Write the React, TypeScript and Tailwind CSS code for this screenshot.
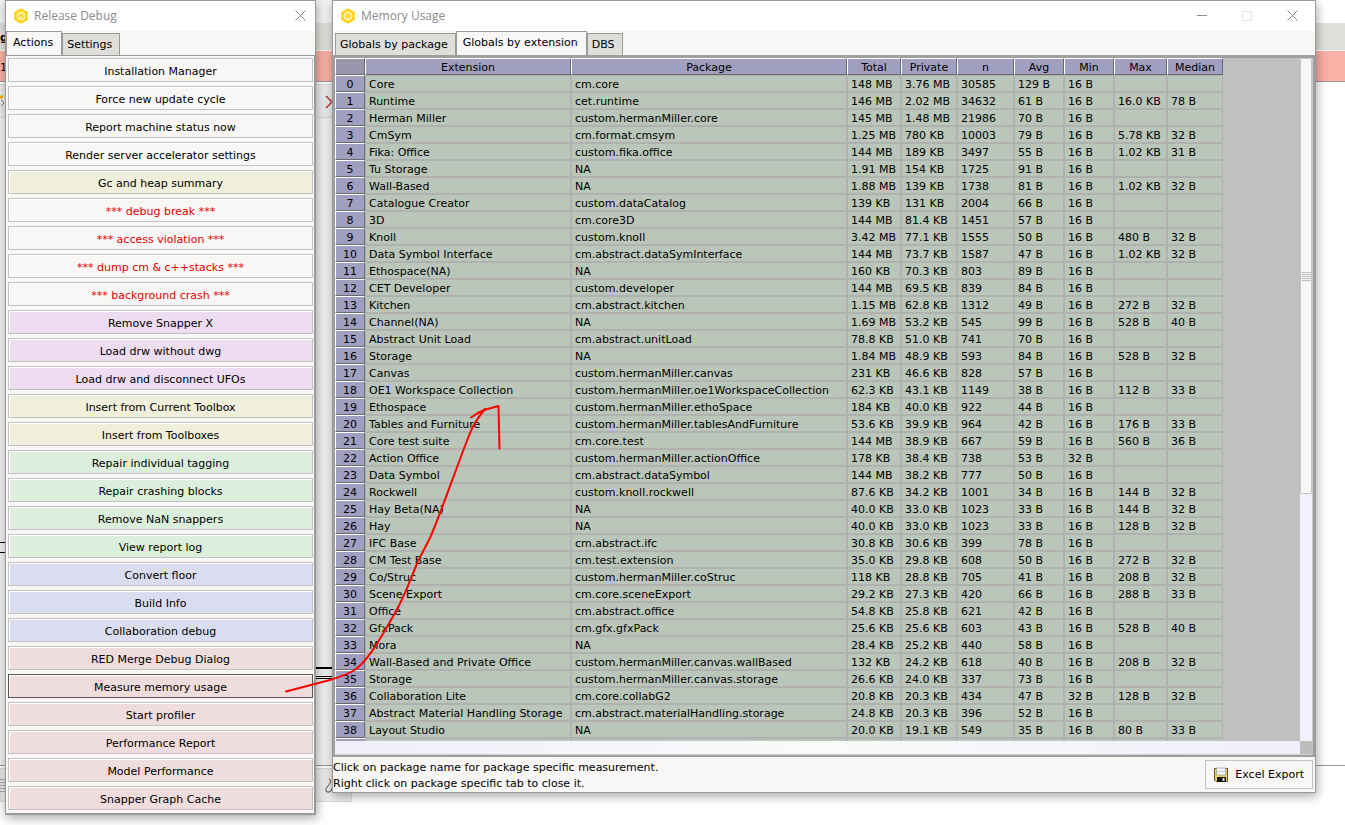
import clsx from "clsx";

type Tone = "plain" | "sand" | "alert" | "violet" | "mint" | "sky" | "rose";

const toneClasses: Record<Tone, string> = {
  plain: "bg-[#f8f7f5] text-black",
  sand: "bg-[#efefdb] text-black",
  alert: "bg-[#f8f7f5] text-[#e60000]",
  violet: "bg-[#eedcf0] text-black",
  mint: "bg-[#dcefdc] text-black",
  sky: "bg-[#dadcef] text-black",
  rose: "bg-[#efdcdc] text-black",
};

const actions: { label: string; tone: Tone; focused?: boolean }[] = [
  { label: "Installation Manager", tone: "plain" },
  { label: "Force new update cycle", tone: "plain" },
  { label: "Report machine status now", tone: "plain" },
  { label: "Render server accelerator settings", tone: "plain" },
  { label: "Gc and heap summary", tone: "sand" },
  { label: "*** debug break ***", tone: "alert" },
  { label: "*** access violation ***", tone: "alert" },
  { label: "*** dump cm & c++stacks ***", tone: "alert" },
  { label: "*** background crash ***", tone: "alert" },
  { label: "Remove Snapper X", tone: "violet" },
  { label: "Load drw without dwg", tone: "violet" },
  { label: "Load drw and disconnect UFOs", tone: "violet" },
  { label: "Insert from Current Toolbox", tone: "sand" },
  { label: "Insert from Toolboxes", tone: "sand" },
  { label: "Repair individual tagging", tone: "mint" },
  { label: "Repair crashing blocks", tone: "mint" },
  { label: "Remove NaN snappers", tone: "mint" },
  { label: "View report log", tone: "mint" },
  { label: "Convert floor", tone: "sky" },
  { label: "Build Info", tone: "sky" },
  { label: "Collaboration debug", tone: "sky" },
  { label: "RED Merge Debug Dialog", tone: "rose" },
  { label: "Measure memory usage", tone: "rose", focused: true },
  { label: "Start profiler", tone: "rose" },
  { label: "Performance Report", tone: "rose" },
  { label: "Model Performance", tone: "rose" },
  { label: "Snapper Graph Cache", tone: "rose" },
];

const columns = [
  { label: "", width: "w-[30px]" },
  { label: "Extension", width: "w-[206px]" },
  { label: "Package", width: "w-[276px]" },
  { label: "Total", width: "w-[54px]" },
  { label: "Private", width: "w-[56px]" },
  { label: "n", width: "w-[57px]" },
  { label: "Avg", width: "w-[50px]" },
  { label: "Min", width: "w-[50px]" },
  { label: "Max", width: "w-[53px]" },
  { label: "Median", width: "w-[56px]" },
];

// extension, package, total, private, n, avg, min, max, median
const rows: string[][] = [
  ["Core", "cm.core", "148 MB", "3.76 MB", "30585", "129 B", "16 B", "", ""],
  ["Runtime", "cet.runtime", "146 MB", "2.02 MB", "34632", "61 B", "16 B", "16.0 KB", "78 B"],
  ["Herman Miller", "custom.hermanMiller.core", "145 MB", "1.48 MB", "21986", "70 B", "16 B", "", ""],
  ["CmSym", "cm.format.cmsym", "1.25 MB", "780 KB", "10003", "79 B", "16 B", "5.78 KB", "32 B"],
  ["Fika: Office", "custom.fika.office", "144 MB", "189 KB", "3497", "55 B", "16 B", "1.02 KB", "31 B"],
  ["Tu Storage", "NA", "1.91 MB", "154 KB", "1725", "91 B", "16 B", "", ""],
  ["Wall-Based", "NA", "1.88 MB", "139 KB", "1738", "81 B", "16 B", "1.02 KB", "32 B"],
  ["Catalogue Creator", "custom.dataCatalog", "139 KB", "131 KB", "2004", "66 B", "16 B", "", ""],
  ["3D", "cm.core3D", "144 MB", "81.4 KB", "1451", "57 B", "16 B", "", ""],
  ["Knoll", "custom.knoll", "3.42 MB", "77.1 KB", "1555", "50 B", "16 B", "480 B", "32 B"],
  ["Data Symbol Interface", "cm.abstract.dataSymInterface", "144 MB", "73.7 KB", "1587", "47 B", "16 B", "1.02 KB", "32 B"],
  ["Ethospace(NA)", "NA", "160 KB", "70.3 KB", "803", "89 B", "16 B", "", ""],
  ["CET Developer", "custom.developer", "144 MB", "69.5 KB", "839", "84 B", "16 B", "", ""],
  ["Kitchen", "cm.abstract.kitchen", "1.15 MB", "62.8 KB", "1312", "49 B", "16 B", "272 B", "32 B"],
  ["Channel(NA)", "NA", "1.69 MB", "53.2 KB", "545", "99 B", "16 B", "528 B", "40 B"],
  ["Abstract Unit Load", "cm.abstract.unitLoad", "78.8 KB", "51.0 KB", "741", "70 B", "16 B", "", ""],
  ["Storage", "NA", "1.84 MB", "48.9 KB", "593", "84 B", "16 B", "528 B", "32 B"],
  ["Canvas", "custom.hermanMiller.canvas", "231 KB", "46.6 KB", "828", "57 B", "16 B", "", ""],
  ["OE1 Workspace Collection", "custom.hermanMiller.oe1WorkspaceCollection", "62.3 KB", "43.1 KB", "1149", "38 B", "16 B", "112 B", "33 B"],
  ["Ethospace", "custom.hermanMiller.ethoSpace", "184 KB", "40.0 KB", "922", "44 B", "16 B", "", ""],
  ["Tables and Furniture", "custom.hermanMiller.tablesAndFurniture", "53.6 KB", "39.9 KB", "964", "42 B", "16 B", "176 B", "33 B"],
  ["Core test suite", "cm.core.test", "144 MB", "38.9 KB", "667", "59 B", "16 B", "560 B", "36 B"],
  ["Action Office", "custom.hermanMiller.actionOffice", "178 KB", "38.4 KB", "738", "53 B", "32 B", "", ""],
  ["Data Symbol", "cm.abstract.dataSymbol", "144 MB", "38.2 KB", "777", "50 B", "16 B", "", ""],
  ["Rockwell", "custom.knoll.rockwell", "87.6 KB", "34.2 KB", "1001", "34 B", "16 B", "144 B", "32 B"],
  ["Hay Beta(NA)", "NA", "40.0 KB", "33.0 KB", "1023", "33 B", "16 B", "144 B", "32 B"],
  ["Hay", "NA", "40.0 KB", "33.0 KB", "1023", "33 B", "16 B", "128 B", "32 B"],
  ["IFC Base", "cm.abstract.ifc", "30.8 KB", "30.6 KB", "399", "78 B", "16 B", "", ""],
  ["CM Test Base", "cm.test.extension", "35.0 KB", "29.8 KB", "608", "50 B", "16 B", "272 B", "32 B"],
  ["Co/Struc", "custom.hermanMiller.coStruc", "118 KB", "28.8 KB", "705", "41 B", "16 B", "208 B", "32 B"],
  ["Scene Export", "cm.core.sceneExport", "29.2 KB", "27.3 KB", "420", "66 B", "16 B", "288 B", "33 B"],
  ["Office", "cm.abstract.office", "54.8 KB", "25.8 KB", "621", "42 B", "16 B", "", ""],
  ["GfxPack", "cm.gfx.gfxPack", "25.6 KB", "25.6 KB", "603", "43 B", "16 B", "528 B", "40 B"],
  ["Mora", "NA", "28.4 KB", "25.2 KB", "440", "58 B", "16 B", "", ""],
  ["Wall-Based and Private Office", "custom.hermanMiller.canvas.wallBased", "132 KB", "24.2 KB", "618", "40 B", "16 B", "208 B", "32 B"],
  ["Storage", "custom.hermanMiller.canvas.storage", "26.6 KB", "24.0 KB", "337", "73 B", "16 B", "", ""],
  ["Collaboration Lite", "cm.core.collabG2", "20.8 KB", "20.3 KB", "434", "47 B", "32 B", "128 B", "32 B"],
  ["Abstract Material Handling Storage", "cm.abstract.materialHandling.storage", "24.8 KB", "20.3 KB", "396", "52 B", "16 B", "", ""],
  ["Layout Studio", "NA", "20.0 KB", "19.1 KB", "549", "35 B", "16 B", "80 B", "33 B"],
];

const bevel =
  "border border-t-white border-l-white border-r-[#6a6a6a] border-b-[#6a6a6a] px-0 pt-[2px] pb-0 text-center font-normal";

function AppLogo() {
  return (
    <svg className="size-4 shrink-0" viewBox="0 0 16 16" fill="none" aria-hidden="true">
      <path
        d="M8 1.100 14 4.500V11.500L8 14.900 2 11.500V4.500Z"
        fill="#fdd31d"
        stroke="#fdd31d"
        strokeWidth="1.600"
        strokeLinejoin="round"
      />
      <circle cx="8" cy="8" r="4" stroke="#fff6c8" />
      <path
        d="M8 8.200V10M6 6.200h4L11 8.800M6 6.200 5 8.800M5.400 10.200h5.200"
        stroke="#fff6c8"
        strokeWidth=".9"
      />
    </svg>
  );
}

function CloseIcon() {
  return (
    <svg className="size-[11px]" viewBox="0 0 11 11" stroke="#8a8a8a" aria-hidden="true">
      <path d="M.5.5l10 10M10.5.5l-10 10" />
    </svg>
  );
}

function FloppyIcon() {
  return (
    <svg className="size-4" viewBox="0 0 16 16" aria-hidden="true">
      <path d="M1.500 1.500h13v13H3l-1.500-1.500z" fill="#ecd25c" stroke="#6b5620" />
      <path d="M3.500 1h9v7h-9z" fill="#f4f4f4" stroke="#8b8b8b" strokeWidth=".6" />
      <path d="M4 4.500h8" stroke="#c3ccd6" />
      <path d="M4 10h9v5H4z" fill="#111" />
      <path d="M9.500 11h2v3h-2z" fill="#e8e8e8" />
    </svg>
  );
}

function TitleBar({ title, resizable }: { title: string; resizable?: boolean }) {
  return (
    <header className="flex h-[30px] items-center bg-white pb-px pl-[7px]">
      <AppLogo />
      <h1 className="flex-1 pt-px pl-[5px] font-['Open_Sans','Noto_Sans',sans-serif] text-[12px] leading-4 text-[#8c8c8c]">
        {title}
      </h1>
      {resizable ? (
        <>
          <button type="button" aria-label="Minimize" className="flex h-full w-[45px] items-center justify-center">
            <span className="h-px w-[10px] bg-[#8a8a8a]" />
          </button>
          <button type="button" aria-label="Maximize" disabled className="flex h-full w-[45px] items-center justify-center">
            <span className="size-[10px] border border-[#e4e4e4]" />
          </button>
        </>
      ) : null}
      <button
        type="button"
        aria-label="Close"
        className={clsx("flex h-full items-center justify-center", resizable ? "w-[46px]" : "w-[29px]")}
      >
        <CloseIcon />
      </button>
    </header>
  );
}

function Tab({ label, active }: { label: string; active?: boolean }) {
  return (
    <button
      type="button"
      role="tab"
      aria-selected={Boolean(active)}
      className={clsx(
        "border border-b-0 border-[#9a9a9a] whitespace-nowrap",
        active ? "h-6 bg-[#f8f7f5] pr-2 pb-[2px] pl-[6px]" : "h-[22px] bg-[#e0deda] pr-[7px] pl-1",
      )}
    >
      {label}
    </button>
  );
}

function DebugWindow() {
  return (
    <section className="w-[311px] shrink-0 border border-[#9a9a9a] bg-[#f8f7f5] shadow-[1px_3px_10px_rgba(0,0,0,0.35)]">
      <TitleBar title="Release Debug" />
      <div role="tablist" className="flex h-6 items-end">
        <Tab label="Actions" active />
        <Tab label="Settings" />
      </div>
      <div className="flex flex-col gap-1 border-t border-r border-b border-[#9a9a9a] pt-[2px] pr-px pb-[3px] pl-[2px]">
        {actions.map((action) => (
          <button
            key={action.label}
            type="button"
            className={clsx(
              "h-6 border pt-[2px] shadow-[inset_1px_1px_0_#fff]",
              action.focused ? "border-[#555]" : "border-[#c2c2c2]",
              toneClasses[action.tone],
            )}
          >
            {action.label}
          </button>
        ))}
      </div>
    </section>
  );
}

function MemoryTable() {
  return (
    <table className="w-[888px] table-fixed border-separate border-spacing-0 leading-[13px]">
      <colgroup>
        {columns.map((column) => (
          <col key={column.label} className={column.width} />
        ))}
      </colgroup>
      <thead>
        <tr className="h-[17px]">
          {columns.map((column, i) => (
            <th key={column.label} className={clsx(bevel, i === 0 ? "bg-[#9796ab]" : "bg-[#a09fc0]")}>
              {column.label}
            </th>
          ))}
        </tr>
      </thead>
      <tbody>
        {rows.map((row, i) => (
          <tr key={i} className="h-[17px]">
            <th className={clsx(bevel, "bg-[#a09fc0]")}>{i}</th>
            {row.map((value, j) => (
              <td
                key={j}
                className="border border-[#b1b1b1] bg-[#bac6ba] pt-[2px] pr-0 pb-0 pl-[3px] whitespace-nowrap"
              >
                {value}
              </td>
            ))}
          </tr>
        ))}
        {/* top edge of the next row, cut off by the scroll bar */}
        <tr className="h-[3px]">
          <th className="border-t border-l border-white bg-[#a09fc0] p-0" />
          {columns.slice(1).map((column) => (
            <td key={column.label} className="border border-b-0 border-[#b1b1b1] bg-[#bac6ba] p-0" />
          ))}
        </tr>
      </tbody>
    </table>
  );
}

function MemoryWindow() {
  return (
    <section className="min-w-0 flex-1 border border-[#9a9a9a] bg-[#f8f7f5] shadow-[1px_3px_10px_rgba(0,0,0,0.35)]">
      <TitleBar title="Memory Usage" resizable />
      <div role="tablist" className="flex h-6 items-end pl-[2px]">
        <Tab label="Globals by package" />
        <Tab label="Globals by extension" active />
        <Tab label="DBS" />
      </div>
      <div className="border-t-3 border-r-2 border-b-2 border-l-2 border-[#9f9f9f]">
        <div className="flex">
          <div className="min-w-0 flex-1 overflow-hidden bg-[#c0c0c0]">
            <MemoryTable />
          </div>
          <div className="flex w-[13px] flex-col border-r border-[#c8c8c8] bg-[#f2f1fa]">
            <div className="flex h-[436px] flex-col items-center justify-center gap-px rounded-[2px] border border-[#c4c4c4] bg-[#f8f7f5]">
              {[0, 1, 2, 3, 4].map((line) => (
                <span key={line} className="h-px w-[9px] bg-[#bcbcbc]" />
              ))}
            </div>
          </div>
        </div>
        <div className="flex h-[14px] border-b border-[#d0d0d0]">
          <div className="flex-1 bg-linear-to-r from-[#f0eefa] via-[#fafafa] to-[#f0eefa]" />
          <div className="w-[13px] bg-[#bdbdbd]" />
        </div>
      </div>
      <footer className="flex h-[35px] items-center justify-between pr-[2px]">
        <p className="pt-[2px] leading-4">
          Click on package name for package specific measurement.
          <br />
          Right click on package specific tab to close it.
        </p>
        <button
          type="button"
          className="flex h-[29px] items-center gap-[6px] border border-[#c2c2c2] pr-2 pl-[7px] whitespace-nowrap"
        >
          <FloppyIcon />
          Excel Export
        </button>
      </footer>
    </section>
  );
}

/* Application frame that shows around and between the two dialogs */
function Backdrop() {
  return (
    <div className="absolute inset-0 flex flex-col bg-white" aria-hidden="true">
      <div className="flex h-[23px]">
        <div className="w-[332px] bg-[#f3f3f3]" />
      </div>
      <div className="h-7 border-b border-white bg-[#e0dfdb] pt-[7px] font-bold">g</div>
      <div className="h-[31px] border-b border-[#999] bg-[#fab0a4] pt-[9px]">1</div>
      <div className="mt-[2px] h-[34px] w-[332px] border-y border-[#d8d8d8] bg-[#ececec]" />
      <div className="h-[648px] border-b border-[#999]">
        <div className="h-full w-[332px] bg-[#f1f1f1]" />
      </div>
      <div className="mt-[2px] h-[34px] w-[352px] border border-[#d8d8d8] bg-[#ececec]" />
    </div>
  );
}

function BackdropMarks() {
  return (
    <svg className="pointer-events-none absolute top-0 left-0 h-[825px] w-[332px]" fill="none" aria-hidden="true">
      <path d="M326 96l6 6-6 6" stroke="#b03a3a" strokeWidth="1.500" />
      <path d="M0 97h3" stroke="#e8b800" strokeWidth="3" />
      <path d="M1 100l3 3-3 3" stroke="#777" />
      <path d="M0 542.500h5M0 552.500h5M316 676.500h16M316 678.500h16" stroke="#000" />
      <path d="M316 668h16" stroke="#000" strokeWidth="2" />
      <path d="M0 779.500h5M0 782.500h5M0 785.500h5M0 788.500h5M0 791.500h5" stroke="#aaa" />
      <path d="M329 779c3 1 1 5-1 7-3 3-3 6 0 6 2 0 4-1 4-4" stroke="#444" />
    </svg>
  );
}

function ArrowAnnotation() {
  return (
    <svg
      className="pointer-events-none absolute top-0 left-0 h-[825px] w-[520px]"
      fill="none"
      stroke="#ff0000"
      strokeWidth="2"
      strokeLinecap="round"
      strokeLinejoin="round"
      aria-hidden="true"
    >
      <path d="M286 691.500 330 680Q346 675 353 671C368 662 381 637 395 613 405 596 411 578 418 561L430 538C439 518 458 463 470 433Q475 421 485 409" />
      <path d="M471 417.500Q477 413 484 410L498.500 406 499.500 448.500" />
    </svg>
  );
}

export default function App() {
  return (
    <main className="relative min-h-screen overflow-hidden font-['Verdana','DejaVu_Sans',sans-serif] text-[11px] leading-[15px] text-black">
      <Backdrop />
      <BackdropMarks />
      <div className="relative flex items-start gap-4 pr-[29px] pb-[10px] pl-[5px]">
        <DebugWindow />
        <MemoryWindow />
      </div>
      <ArrowAnnotation />
    </main>
  );
}
